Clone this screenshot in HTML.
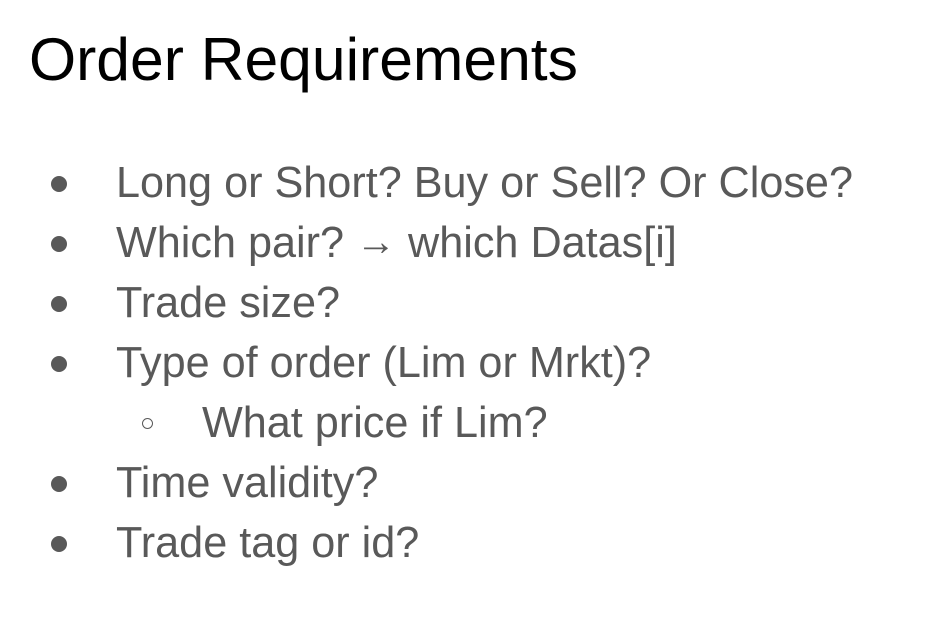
<!DOCTYPE html>
<html><head><meta charset="utf-8"><style>
html,body{margin:0;padding:0;background:#fff;width:948px;height:638px;overflow:hidden}
body{position:relative;font-family:"Liberation Sans",sans-serif}
.t{position:absolute;left:29px;top:24px;font-size:60.6px;line-height:70px;color:#000;white-space:nowrap}
.l{position:absolute;font-size:43.2px;line-height:50px;color:#595959;white-space:nowrap}
.b{position:absolute;width:16px;height:16px;border-radius:50%;background:#595959}
.s{position:absolute;width:11px;height:11px;border-radius:50%;border:1.5px solid #595959;box-sizing:border-box}
</style></head><body>
<div class="t">Order Requirements</div>
<div class="b" style="left:51px;top:176px"></div><div class="l" style="left:116px;top:158px">Long or Short? Buy or Sell? Or Close?</div>
<div class="b" style="left:51px;top:236px"></div><div class="l" style="left:116px;top:218px">Which pair? <span style="font-size:40px;position:relative;top:-2px">→</span> which Datas[i]</div>
<div class="b" style="left:51px;top:296px"></div><div class="l" style="left:116px;top:278px">Trade size?</div>
<div class="b" style="left:51px;top:356px"></div><div class="l" style="left:116px;top:338px">Type of order (Lim or Mrkt)?</div>
<div class="s" style="left:142px;top:418px"></div><div class="l" style="left:202px;top:398px">What price if Lim?</div>
<div class="b" style="left:51px;top:476px"></div><div class="l" style="left:116px;top:458px">Time validity?</div>
<div class="b" style="left:51px;top:536px"></div><div class="l" style="left:116px;top:518px">Trade tag or id?</div>
</body></html>
